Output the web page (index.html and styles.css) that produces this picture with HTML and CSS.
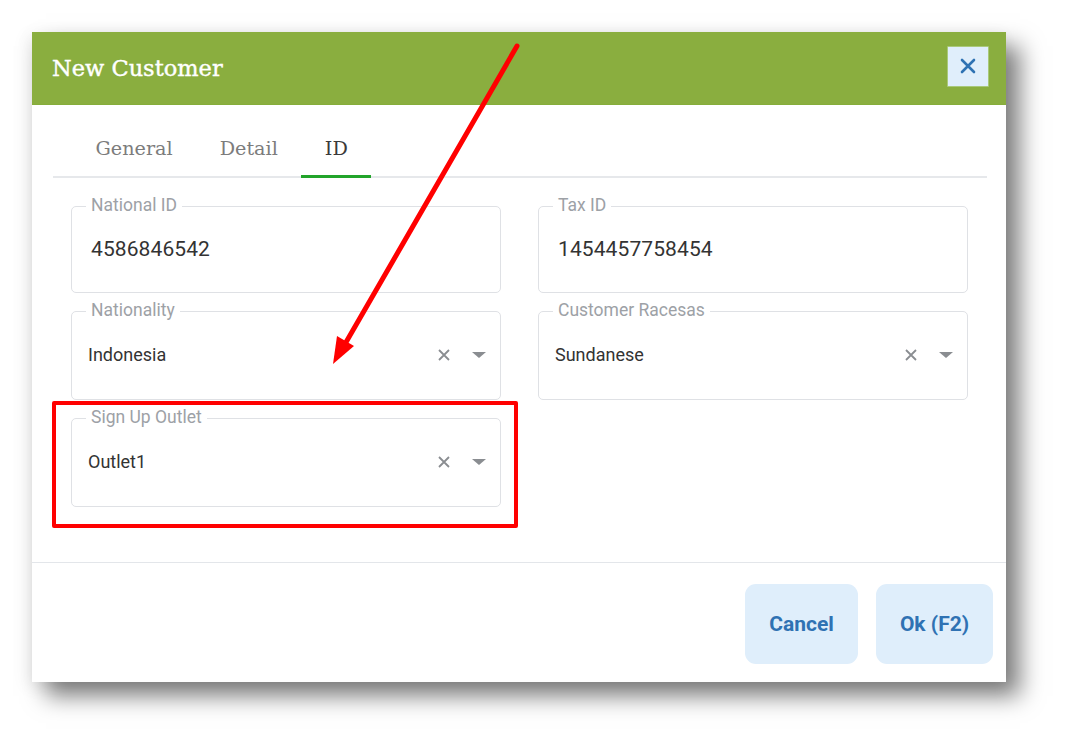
FILE: index.html
```html
<!DOCTYPE html>
<html>
<head>
<meta charset="utf-8">
<link rel="stylesheet" href="styles.css">
</head>
<body>
<div class="stage">
  <div class="dialog">
    <div class="header">
      <div class="title">New Customer</div>
      <button class="close" aria-label="Close">
        <svg width="18" height="18" viewBox="0 0 18 18"><path d="M3 3L15 15M15 3L3 15" stroke="#2f72b3" stroke-width="2.6" stroke-linecap="round"/></svg>
      </button>
    </div>
    <div class="tabs">
      <div class="tab">General</div>
      <div class="tab">Detail</div>
      <div class="tab active">ID</div>
    </div>
    <div class="content">
      <div class="field text">
        <span class="label">National ID</span>
        <span class="value">4586846542</span>
      </div>
      <div class="field text">
        <span class="label">Tax ID</span>
        <span class="value">1454457758454</span>
      </div>
      <div class="field select">
        <span class="label">Nationality</span>
        <span class="value">Indonesia</span>
        <span class="clear"><svg width="14" height="14" viewBox="0 0 14 14"><path d="M2 2L12 12M12 2L2 12" stroke="#8a8d91" stroke-width="1.8"/></svg></span>
        <span class="caret"></span>
      </div>
      <div class="field select">
        <span class="label">Customer Racesas</span>
        <span class="value">Sundanese</span>
        <span class="clear"><svg width="14" height="14" viewBox="0 0 14 14"><path d="M2 2L12 12M12 2L2 12" stroke="#8a8d91" stroke-width="1.8"/></svg></span>
        <span class="caret"></span>
      </div>
      <div class="field select">
        <span class="label">Sign Up Outlet</span>
        <span class="value">Outlet1</span>
        <span class="clear"><svg width="14" height="14" viewBox="0 0 14 14"><path d="M2 2L12 12M12 2L2 12" stroke="#8a8d91" stroke-width="1.8"/></svg></span>
        <span class="caret"></span>
      </div>
    </div>
    <div class="footer">
      <button class="btn">Cancel</button>
      <button class="btn ok">Ok (F2)</button>
    </div>
  </div>
  <div class="highlight"></div>
  <svg class="arrow" width="1072" height="747" viewBox="0 0 1072 747">
    <line x1="517" y1="46" x2="345" y2="344" stroke="#ff0000" stroke-width="5" stroke-linecap="round"/>
    <polygon points="333,364 337,336 354,346" fill="#ff0000"/>
  </svg>
</div>
</body>
</html>
```
FILE: styles.css
```css
* { box-sizing: border-box; }
html, body { margin: 0; padding: 0; background: #ffffff; }
body { width: 1072px; height: 747px; overflow: hidden; font-family: Roboto, "Liberation Sans", sans-serif; }
.stage { position: relative; width: 1072px; height: 747px; padding: 32px 0 0 32px; }
.dialog {
  width: 974px; height: 650px; background: #fff;
  display: flex; flex-direction: column;
  box-shadow: 14px 14px 22px rgba(0,0,0,0.5), -4px 4px 16px rgba(0,0,0,0.08);
}
.header {
  height: 73px; background: #8aae3f; border-bottom: 1px solid #86ad3a;
  display: flex; align-items: center; justify-content: space-between;
  padding: 0 17px 0 20px;
}
.title { font-family: "DejaVu Serif", serif; color: #fff; font-size: 22.5px; letter-spacing: 0; -webkit-text-stroke: 0.4px #fff; }
.close {
  width: 42px; height: 41px; margin-top: -4px; background: #e0eefb; border: 1px solid #a9c97a;
  display: flex; align-items: center; justify-content: center; padding: 0; border-radius: 1px;
}
.tabs {
  margin: 0 19px 0 21px; padding: 20px 0 0 19px; height: 73px;
  display: flex; border-bottom: 2px solid #e6e8eb;
}
.tab {
  font-family: "DejaVu Serif", serif; font-size: 19.2px; color: #7c7c7c;
  padding: 12px 23.5px 0; height: 53px; margin-bottom: -2px; letter-spacing: 0;
}
.tab.active { color: #3a3a3a; border-bottom: 3px solid #22a42a; }
.content {
  flex: 1; padding: 28px 38px 0 39px;
  display: grid; grid-template-columns: 430px 430px; column-gap: 37px; row-gap: 18px;
  align-content: start;
}
.field {
  position: relative; height: 88px; border: 1px solid #dfe1e5; border-radius: 5px;
  display: flex; align-items: flex-start;
}
.field.text { height: 87px; padding: 30px 0 0 19px; }
.field.select { height: 89px; padding: 31px 13px 0 16px; }
.label {
  position: absolute; top: -12px; left: 14px; padding: 0 5px; background: #fff;
  font-size: 17.5px; line-height: 21px; color: #9da1a6;
}
.field.text .value { font-size: 21px; line-height: 24px; color: #333; letter-spacing: 0.1px; }
.field.select .value { font-size: 18px; line-height: 24px; color: #333; flex: 1; }
.clear { width: 14px; height: 24px; display: flex; align-items: center; margin-right: 21px; }
.caret {
  width: 0; height: 0; margin-top: 9px; margin-right: 1px;
  border-left: 7px solid transparent; border-right: 7px solid transparent; border-top: 6px solid #8a8d91;
}
.footer {
  height: 120px; border-top: 1px solid #e3e6ea;
  display: flex; justify-content: flex-end; align-items: flex-start;
  padding: 21px 13px 0 0; gap: 18px;
}
.btn {
  height: 80px; width: 113px; border: none; border-radius: 11px; background: #dfeefb;
  font-family: Roboto, "Liberation Sans", sans-serif; font-weight: 700; font-size: 21px; color: #2f72b3;
}
.btn.ok { width: 117px; }
.highlight {
  position: absolute; left: 52px; top: 401px; width: 466px; height: 127px;
  border: 4px solid #ff0000; border-radius: 2px;
}
.arrow { position: absolute; left: 0; top: 0; pointer-events: none; }
```
